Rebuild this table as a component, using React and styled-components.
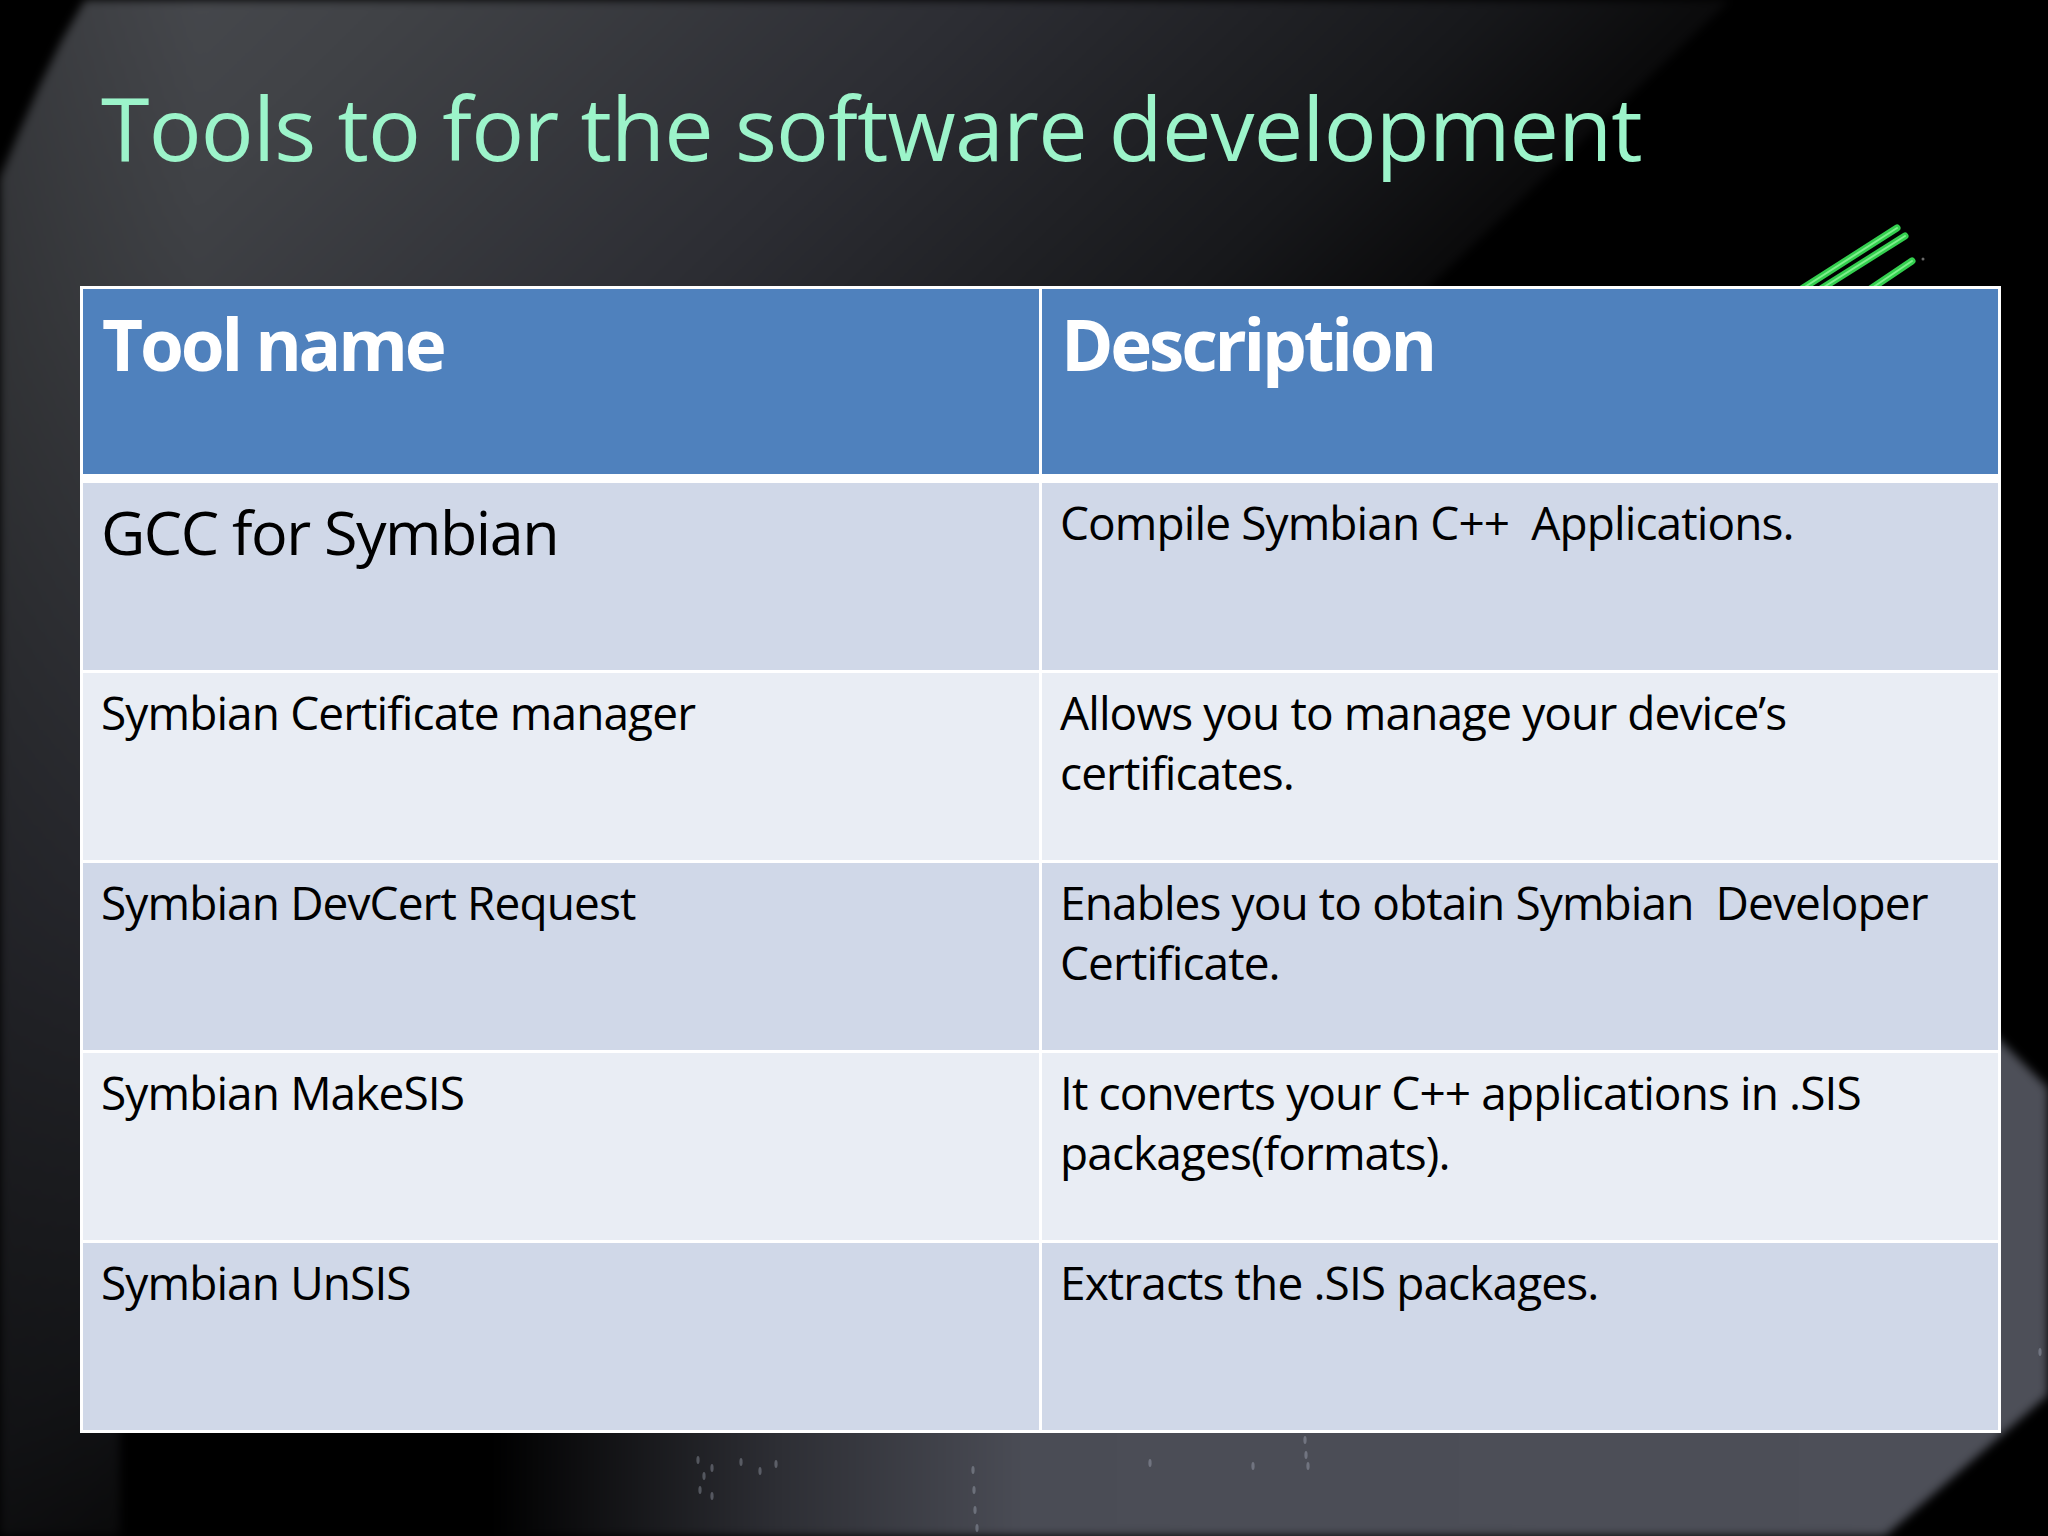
import React from 'react';
import styled, { createGlobalStyle } from 'styled-components';

const GlobalStyle = createGlobalStyle`
  html, body {
    margin: 0;
    padding: 0;
    background: #000;
  }
  body {
    font-family: "Open Sans", "Noto Sans", sans-serif;
  }
`;

const rows = [
  { name: 'GCC for Symbian', desc: ['Compile Symbian C++  Applications.'], big: true },
  { name: 'Symbian Certificate manager', desc: ['Allows you to manage your device’s', 'certificates.'] },
  { name: 'Symbian DevCert Request', desc: ['Enables you to obtain Symbian  Developer', 'Certificate.'] },
  { name: 'Symbian MakeSIS', desc: ['It converts your C++ applications in .SIS', 'packages(formats).'] },
  { name: 'Symbian UnSIS', desc: ['Extracts the .SIS packages.'] },
];

const sparkles = [
  [698, 1460], [704, 1476], [712, 1468], [741, 1462], [760, 1471], [776, 1464],
  [700, 1490], [712, 1496], [973, 1470], [974, 1490], [975, 1510], [977, 1528],
  [1150, 1463], [1253, 1466], [1305, 1440], [1306, 1455], [1308, 1466], [2040, 1352],
];

const App = () => {
  return (
    <>
      <GlobalStyle />
      <Slide>
        <Backdrop>
          <SoftLayer>
            <UpperPanel />
            <LowerPanel />
          </SoftLayer>
          <Decor viewBox="0 0 2048 1536" width="2048" height="1536">
            <g stroke="#34cf4f" strokeWidth="7" strokeLinecap="round">
              <line x1="1800" y1="290" x2="1897" y2="228" />
              <line x1="1816" y1="292" x2="1905" y2="236" />
              <line x1="1866" y1="292" x2="1912" y2="261" />
            </g>
            <g stroke="#7ef08c" strokeWidth="2" strokeLinecap="round">
              <line x1="1800" y1="290" x2="1897" y2="228" />
              <line x1="1816" y1="292" x2="1905" y2="236" />
              <line x1="1866" y1="292" x2="1912" y2="261" />
            </g>
            <circle cx="1923" cy="259" r="1.5" fill="#6a6a6a" />
            <g fill="#c8d0e0" opacity="0.3">
              {sparkles.map(([x, y], i) => (
                <ellipse key={i} cx={x} cy={y} rx="1.6" ry="4" />
              ))}
            </g>
          </Decor>
        </Backdrop>

        <Content>
          <Title>Tools to for the software development</Title>
          <ToolTable>
            <HeadCell>Tool name</HeadCell>
            <HeadCell>Description</HeadCell>
            {rows.map((row, i) => (
              <React.Fragment key={row.name}>
                <BodyCell $band={i % 2 === 0} $big={row.big}>
                  <Line>{row.name}</Line>
                </BodyCell>
                <BodyCell $band={i % 2 === 0}>
                  {row.desc.map((d) => (
                    <Line key={d}>{d}</Line>
                  ))}
                </BodyCell>
              </React.Fragment>
            ))}
          </ToolTable>
        </Content>
      </Slide>
    </>
  );
};

export default App;

const Slide = styled.div`
  position: relative;
  width: 2048px;
  height: 1536px;
  overflow: hidden;
  background: #000;
`;

const Backdrop = styled.div`
  position: absolute;
  inset: 0;
  z-index: 0;
`;

const SoftLayer = styled.div`
  position: absolute;
  inset: 0;
  filter: blur(5px);
`;

const UpperPanel = styled.div`
  position: absolute;
  inset: 0;
  clip-path: polygon(85px 0, 1730px 0, 117px 1536px, 0 1536px, 0 178px, 18px 135px, 40px 85px, 62px 40px);
  background:
    linear-gradient(90deg, rgba(0, 0, 0, 0.25) 0, rgba(0, 0, 0, 0) 200px),
    linear-gradient(
      136deg,
      #4a4c51 0%,
      #404246 11%,
      #2c2d33 27%,
      #202125 35%,
      #17181b 41%,
      #0b0b0c 47%,
      #050505 55%
    );
`;

const LowerPanel = styled.div`
  position: absolute;
  inset: 0;
  clip-path: polygon(1350px 392px, 2048px 1088px, 2048px 1395px, 1885px 1536px, 120px 1536px, 120px 1200px);
  background: linear-gradient(
    90deg,
    #000 0%,
    #000 24%,
    #2d2e34 38%,
    #4a4c55 50%,
    #4d4f58 100%
  );
`;

const Decor = styled.svg`
  position: absolute;
  left: 0;
  top: 0;
`;

const Content = styled.div`
  position: relative;
  z-index: 1;
  padding: 83px 0 0 80px;
`;

const Title = styled.h1`
  margin: 0 0 115px 21px;
  font-family: "Open Sans", "Noto Sans", sans-serif;
  font-weight: 400;
  font-size: 88px;
  line-height: 88px;
  letter-spacing: -0.8px;
  color: #9cf4ca;
  white-space: nowrap;
`;

const ToolTable = styled.div`
  box-sizing: border-box;
  width: 1921px;
  display: grid;
  grid-template-columns: 1fr 1fr;
  grid-template-rows: 191px repeat(5, 187px);
  gap: 3px;
  padding: 3px;
  background: #fff;
`;

const HeadCell = styled.div`
  margin-bottom: 6px;
  padding: 10px 18px 0 19px;
  background: #4f81bd;
  color: #fff;
  font-weight: 700;
  font-size: 71px;
  line-height: 90px;
  letter-spacing: -3.2px;
  white-space: nowrap;
`;

const BodyCell = styled.div`
  padding: ${({ $big }) => ($big ? '10px' : '9px')} 18px 0 18px;
  background: ${({ $band }) => ($band ? '#d0d8e8' : '#e9edf4')};
  color: #000;
  font-size: ${({ $big }) => ($big ? '61px' : '46px')};
  line-height: ${({ $big }) => ($big ? '77px' : '60px')};
  letter-spacing: ${({ $big }) => ($big ? '-1.5px' : '-0.9px')};
`;

const Line = styled.div`
  white-space: pre;
`;
